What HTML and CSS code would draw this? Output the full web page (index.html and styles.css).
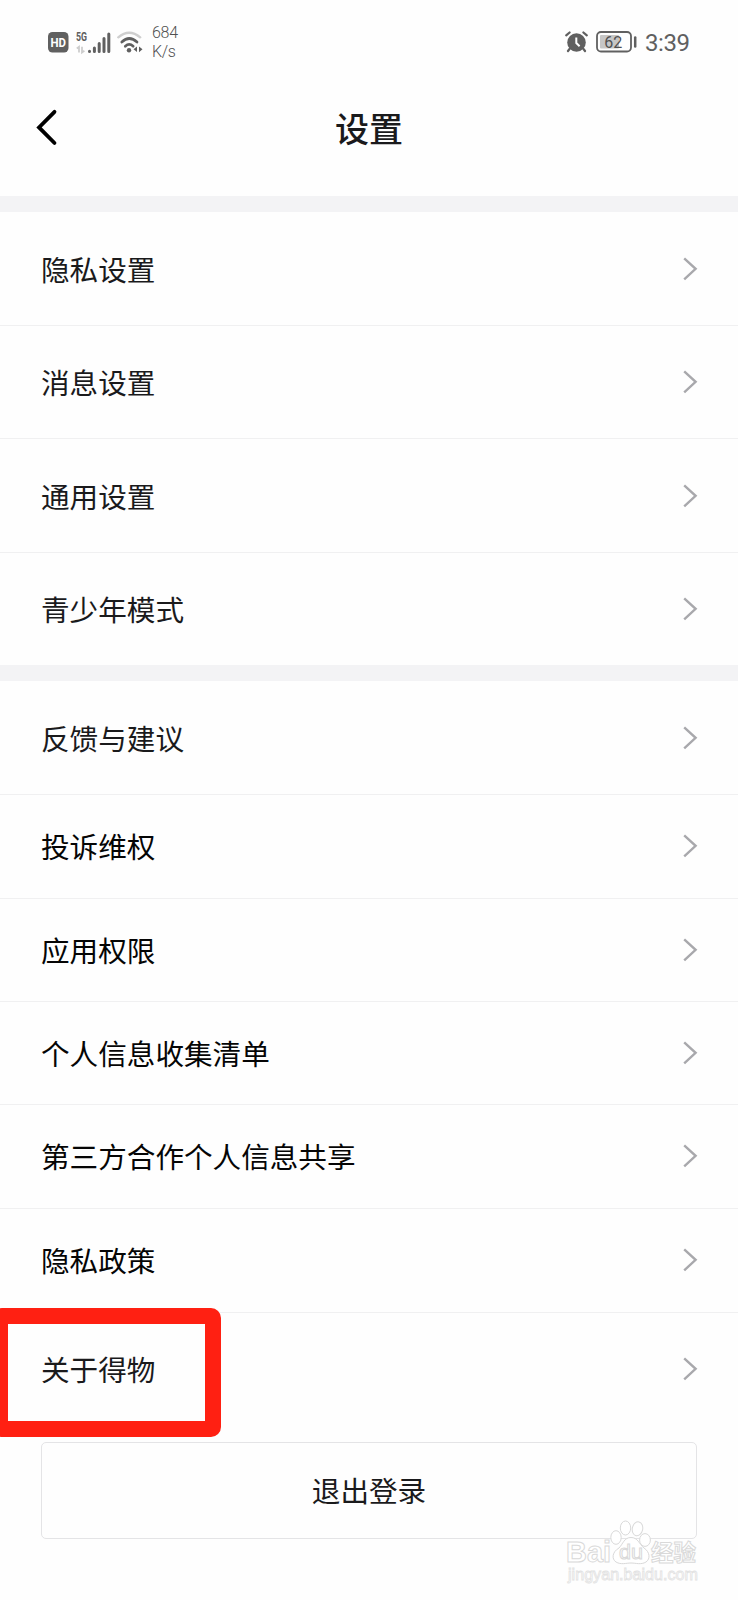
FILE: index.html
```html
<!DOCTYPE html>
<html lang="zh-CN">
<head>
  <meta charset="UTF-8">
  <title>设置</title>
  <link rel="stylesheet" href="styles.css">
</head>
<body>
  <svg class="defs" width="0" height="0">
    <symbol id="arrow" viewBox="0 0 15 24">
      <path d="M1.2 1.3 L12.6 11.8 L1.2 22.3" fill="none" stroke="currentColor" stroke-width="2.4"/>
    </symbol>
  </svg>

  <div class="status">
    <svg class="hd" width="21" height="21" viewBox="0 0 21 21">
      <rect width="20.5" height="20.5" rx="4.5" fill="#606060"/>
      <text x="10.3" y="15" text-anchor="middle" textLength="15.5" lengthAdjust="spacingAndGlyphs" class="hd-text">HD</text>
    </svg>
    <svg class="signal" width="35" height="26" viewBox="0 -3 35 26">
      <text x="0" y="9" textLength="11" lengthAdjust="spacingAndGlyphs" class="net-text">5G</text>
      <path d="M0.8 16.5 L3 14.8 V20.5 M6 14.8 V20.5 L8.4 18.8" fill="none" stroke="#cdcdcd" stroke-width="1.8"/>
      <g stroke="#606060" stroke-width="3" stroke-linecap="round">
        <path d="M13.5 19.2V19.4M18.4 16V19.4M23.2 11.5V19.4M28 6.5V19.4M32.8 2V19.4"/>
      </g>
    </svg>
    <svg class="wifi" width="27" height="23" viewBox="0 0 27 23" fill="none" stroke-linecap="round">
      <path d="M1.3 6.3 Q12.2 -3 23.2 6.3" stroke="#cfcfcf" stroke-width="2.4"/>
      <path d="M4.8 11 Q12.2 4 20 11" stroke="#606060" stroke-width="2.7"/>
      <path d="M8.3 15.2 Q12.2 11.5 16.2 15.2" stroke="#606060" stroke-width="2.7"/>
      <circle cx="12" cy="19.3" r="2.2" fill="#606060"/>
      <path d="M16.5 18.3 L20 15.5 V21 Z M22 15.5 V21.3 L25.5 18.3 Z" fill="#606060"/>
    </svg>
    <div class="speed">684<br>K/s</div>
    <svg class="alarm" width="24" height="22" viewBox="0 0 24 22">
      <circle cx="11.5" cy="11.5" r="9.3" fill="#606060"/>
      <path d="M1.2 4.4 L4.6 1.5 M21.8 4.4 L18.4 1.5 M4.5 18 L3 20 M18.5 18 L20 20" stroke="#606060" stroke-width="2.2" stroke-linecap="round"/>
      <path d="M11.3 6.5 V12 L14.6 15.3" fill="none" stroke="#fff" stroke-width="2"/>
    </svg>
    <svg class="battery" width="42" height="22" viewBox="0 0 42 22">
      <rect x="1" y="1" width="34" height="19.5" rx="4" fill="none" stroke="#606060" stroke-width="1.8"/>
      <rect x="4" y="4" width="19" height="13.5" rx="1" fill="#c6c6c6"/>
      <text x="17.2" y="16.6" text-anchor="middle" class="battery-text">62</text>
      <path d="M39.2 6.5 V15.5" stroke="#606060" stroke-width="2.5" stroke-linecap="round"/>
    </svg>
    <div class="time">3:39</div>
  </div>

  <div class="header">
    <svg class="back" width="24" height="38" viewBox="0 0 24 38">
      <path d="M20.5 2.8 L5 18.4 L20.5 34" fill="none" stroke="#000" stroke-width="3.8" stroke-linecap="round"/>
    </svg>
    <h1>设置</h1>
  </div>

  <div class="list list-main">
    <div class="row">隐私设置<svg class="arrow"><use href="#arrow"/></svg></div>
    <div class="row">消息设置<svg class="arrow"><use href="#arrow"/></svg></div>
    <div class="row">通用设置<svg class="arrow"><use href="#arrow"/></svg></div>
    <div class="row">青少年模式<svg class="arrow"><use href="#arrow"/></svg></div>
  </div>

  <div class="list list-more">
    <div class="row">反馈与建议<svg class="arrow"><use href="#arrow"/></svg></div>
    <div class="row dark">投诉维权<svg class="arrow"><use href="#arrow"/></svg></div>
    <div class="row dark">应用权限<svg class="arrow"><use href="#arrow"/></svg></div>
    <div class="row dark">个人信息收集清单<svg class="arrow"><use href="#arrow"/></svg></div>
    <div class="row dark">第三方合作个人信息共享<svg class="arrow"><use href="#arrow"/></svg></div>
    <div class="row dark">隐私政策<svg class="arrow"><use href="#arrow"/></svg></div>
    <div class="row about">关于得物<svg class="arrow"><use href="#arrow"/></svg><span class="mark"></span></div>
  </div>

  <div class="logout">
    退出登录
    <svg class="watermark" width="136" height="66" viewBox="0 0 136 66">
      <g fill="#fff" stroke="#d9d9d9" stroke-width="1">
        <text x="0" y="42" textLength="45" lengthAdjust="spacingAndGlyphs" class="wm-logo">Bai</text>
        <ellipse cx="50" cy="17.5" rx="5.2" ry="6.8"/>
        <ellipse cx="59.5" cy="8" rx="5.2" ry="7"/>
        <ellipse cx="71.5" cy="8.8" rx="5.2" ry="7" transform="rotate(12 71.5 8.8)"/>
        <ellipse cx="79" cy="20" rx="5.4" ry="6.4"/>
        <path d="M65 17.5 C58 17.5 57 24 53 28 C46 32 45.5 39 50 42 C55 45 60 43 65 43 C70 43 75 45 80 42 C84.5 39 84 32 78 28 C73 24 72 17.5 65 17.5 Z"/>
        <text x="53" y="39" textLength="24" lengthAdjust="spacingAndGlyphs" class="wm-du">du</text>
        <text x="85" y="41" textLength="45" lengthAdjust="spacingAndGlyphs" class="wm-cn">经验</text>
      </g>
      <text x="2" y="60" textLength="130" lengthAdjust="spacingAndGlyphs" class="wm-url">jingyan.baidu.com</text>
    </svg>
  </div>
</body>
</html>
```

FILE: styles.css
```css
* { box-sizing: border-box; }
body { margin: 0; width: 738px; height: 1600px; overflow: hidden; background: #fefefe; color: #1a1a1c; font-family: Roboto, "Noto Sans CJK SC", sans-serif; }
svg { flex: none; }
.defs { display: block; }

.status { display: flex; align-items: flex-start; height: 84px; padding: 31px 48px 0 48px; color: #606060; }
.hd { margin-top: 1px; }
.signal { margin: -2px 0 0 7px; }
.wifi { margin-left: 6px; }
.speed { margin: -7px 0 0 8px; font-size: 16px; line-height: 18.5px; font-weight: 300; letter-spacing: -0.3px; color: #505050; }
.alarm { margin-left: auto; }
.battery { margin-left: 7px; }
.time { width: 45px; margin: -2px 0 0 7px; font-size: 24px; line-height: 28px; letter-spacing: -0.4px; white-space: nowrap; }
.hd-text { font: bold 12.5px Roboto, sans-serif; fill: #fff; }
.net-text { font: bold 12.5px Roboto, sans-serif; fill: #606060; }
.battery-text { font: 16px Roboto, sans-serif; fill: #505050; }

.header { display: flex; align-items: center; height: 111px; padding: 0 34px 24px; }
.header h1 { flex: 1; margin: 4px 24px 0 0; text-align: center; font-size: 34px; line-height: 48px; font-weight: 500; }

.list { display: grid; border-top: 16px solid #f3f3f5; }
.list-main { margin-top: 1px; grid-template-rows: 114px 113px 114px 112px; }
.list-more { grid-template-rows: 114px 104px 103px 103px 104px 104px 112px; }
.row { position: relative; display: flex; align-items: center; justify-content: space-between; padding: 4px 40px 0 41px; border-bottom: 1px solid #f0f0f1; font-size: 28.6px; line-height: 40px; }
.row:last-child { border-bottom: none; }
.row.dark { padding-top: 3px; color: #050505; }
.arrow { width: 15px; height: 24px; margin-top: -4px; color: #a8a8ac; }

/* red frame around the last entry */
.mark { position: absolute; left: -8px; top: -5px; width: 229px; height: 129px; border: 16px solid #ff2012; border-radius: 10px; }

.logout { position: relative; display: flex; align-items: center; justify-content: center; height: 97px; margin: 17px 41px 0; padding-top: 3px; border: 1px solid #e4e4e6; border-radius: 5px; font-size: 28.6px; line-height: 40px; }
.watermark { position: absolute; left: 524px; top: 77px; }
.wm-logo { font: bold 30px "Liberation Sans", sans-serif; }
.wm-du { font: 21px "Liberation Sans", sans-serif; }
.wm-cn { font: bold 23px "Noto Sans CJK SC", sans-serif; }
.wm-url { font: 16px "Liberation Sans", sans-serif; fill: #fff; stroke: #e2e2e2; stroke-width: 0.8px; }
```
